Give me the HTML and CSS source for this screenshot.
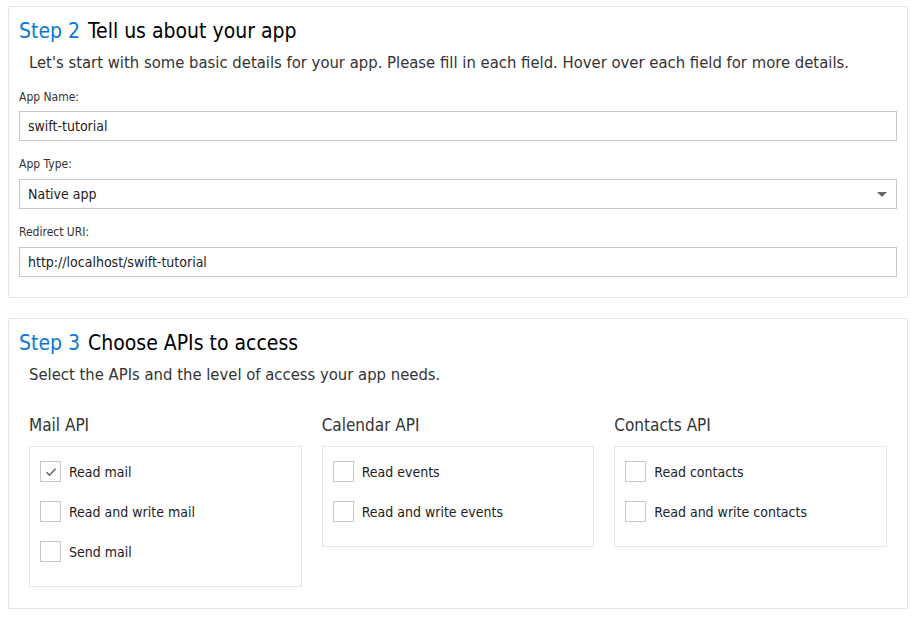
FILE: index.html
```html
<!DOCTYPE html>
<html>
<head>
<meta charset="utf-8">
<link rel="stylesheet" href="styles.css">
</head>
<body>
<section class="panel panel-app">
  <h2 class="step"><span class="step-num">Step 2</span> Tell us about your app</h2>
  <p class="intro">Let's start with some basic details for your app. Please fill in each field. Hover over each field for more details.</p>
  <div class="field field-first">
    <label class="field-label">App Name:</label>
    <div class="input">swift-tutorial</div>
  </div>
  <div class="field">
    <label class="field-label">App Type:</label>
    <div class="input select">Native app<span class="caret"></span></div>
  </div>
  <div class="field">
    <label class="field-label">Redirect URI:</label>
    <div class="input">http://localhost/swift-tutorial</div>
  </div>
</section>
<section class="panel panel-apis">
  <h2 class="step"><span class="step-num">Step 3</span> Choose APIs to access</h2>
  <p class="intro">Select the APIs and the level of access your app needs.</p>
  <div class="api-grid">
    <div class="api">
      <h3 class="api-title">Mail API</h3>
      <div class="api-box">
        <div class="opt"><span class="cb checked"><svg width="12" height="10" viewBox="0 0 12 10"><path d="M1.5 5.2 L4.5 8.2 L10.5 1.8" fill="none" stroke="#666" stroke-width="1.6"/></svg></span>Read mail</div>
        <div class="opt"><span class="cb"></span>Read and write mail</div>
        <div class="opt"><span class="cb"></span>Send mail</div>
      </div>
    </div>
    <div class="api">
      <h3 class="api-title">Calendar API</h3>
      <div class="api-box">
        <div class="opt"><span class="cb"></span>Read events</div>
        <div class="opt"><span class="cb"></span>Read and write events</div>
      </div>
    </div>
    <div class="api">
      <h3 class="api-title">Contacts API</h3>
      <div class="api-box">
        <div class="opt"><span class="cb"></span>Read contacts</div>
        <div class="opt"><span class="cb"></span>Read and write contacts</div>
      </div>
    </div>
  </div>
</section>
</body>
</html>
```
FILE: styles.css
```css
* { box-sizing: border-box; }
body {
  margin: 6px 8px;
  font-family: "DejaVu Sans Condensed", "DejaVu Sans", Tahoma, sans-serif;
  color: #222;
  background: #fff;
}
.panel {
  border: 1px solid #e6e6e6;
  padding: 0 10px;
}
.panel-app { height: 292px; padding-top: 11px; }
.panel-apis { margin-top: 20px; height: 291px; padding-top: 11px; }
.step {
  margin: 0;
  font-weight: normal;
  font-size: 21px;
  line-height: 26px;
  color: #000;
}
.step-num { color: #0a78d4; margin-right: 2px; }
.intro {
  margin: 9px 0 0 10px;
  font-size: 16.5px;
  line-height: 20px;
  color: #333;
}
.field { margin-top: 15px; }
.field-label {
  display: block;
  font-size: 12px;
  line-height: 16px;
  color: #333;
  margin-bottom: 7px;
}
.field-first { margin-top: 16px; }
.field-first .field-label { margin-bottom: 6px; }
.input {
  height: 30px;
  border: 1px solid #c8c8c8;
  padding: 0 8px;
  font-size: 14px;
  line-height: 28px;
  color: #222;
  position: relative;
}
.caret {
  position: absolute;
  right: 9px;
  top: 12px;
  width: 0; height: 0;
  border-left: 5px solid transparent;
  border-right: 5px solid transparent;
  border-top: 5px solid #666;
}
.api-grid {
  display: grid;
  grid-template-columns: repeat(3, 1fr);
  column-gap: 20px;
  margin: 29px 10px 0 10px;
  align-items: start;
}
.api-title {
  margin: 0 0 10px;
  font-weight: normal;
  font-size: 17px;
  line-height: 22px;
  color: #333;
}
.api-box {
  border: 1px solid #e6e6e6;
  padding: 14px 10px 24px;
}
.opt {
  display: flex;
  align-items: center;
  height: 21px;
  font-size: 14px;
  color: #222;
}
.opt + .opt { margin-top: 19px; }
.cb {
  width: 21px; height: 21px;
  border: 1px solid #c8c8c8;
  margin-right: 8px;
  display: flex;
  align-items: center;
  justify-content: center;
  flex-shrink: 0;
}
```
